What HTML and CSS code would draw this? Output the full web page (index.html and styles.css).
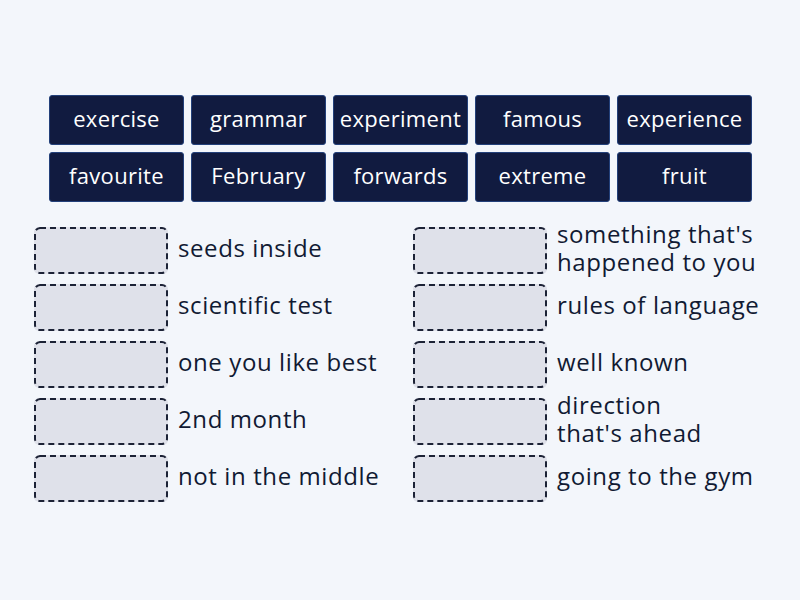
FILE: index.html
```html
<!DOCTYPE html>
<html lang="en">
  <head>
    <meta charset="UTF-8" />
    <meta name="viewport" content="width=device-width, initial-scale=1.0" />
    <title>Match up</title>
    <link rel="stylesheet" href="styles.css">
  </head>
  <body>
    <main class="game">
      <section class="tiles">
        <article class="tile">exercise</article>
        <article class="tile">grammar</article>
        <article class="tile">experiment</article>
        <article class="tile">famous</article>
        <article class="tile">experience</article>
        <article class="tile">favourite</article>
        <article class="tile">February</article>
        <article class="tile">forwards</article>
        <article class="tile">extreme</article>
        <article class="tile">fruit</article>
      </section>
      <section class="clues">
        <div class="clue"><div class="slot"></div><span class="text">seeds inside</span></div>
        <div class="clue"><div class="slot"></div><span class="text">something that's<br>happened to you</span></div>
        <div class="clue"><div class="slot"></div><span class="text">scientific test</span></div>
        <div class="clue"><div class="slot"></div><span class="text">rules of language</span></div>
        <div class="clue"><div class="slot"></div><span class="text">one you like best</span></div>
        <div class="clue"><div class="slot"></div><span class="text">well known</span></div>
        <div class="clue"><div class="slot"></div><span class="text">2nd month</span></div>
        <div class="clue"><div class="slot"></div><span class="text">direction<br>that's ahead</span></div>
        <div class="clue"><div class="slot"></div><span class="text">not in the middle</span></div>
        <div class="clue"><div class="slot"></div><span class="text">going to the gym</span></div>
      </section>
    </main>
  </body>
</html>
```

FILE: styles.css
```css
/* styles.css */
body {
  margin: 0;
  background-color: #f3f6fb;
  font-family: "Open Sans", Lato, sans-serif;
  color: #111a33;
}

.game {
  width: 800px;
  height: 600px;
  padding-top: 95px;
  box-sizing: border-box;
}

.tiles {
  display: grid;
  grid-template-columns: repeat(5, 135px);
  grid-auto-rows: 50px;
  column-gap: 7px;
  row-gap: 7px;
  margin-left: 49px;
}

.tile {
  display: flex;
  justify-content: center;
  align-items: center;
  padding-bottom: 4px;
  box-sizing: border-box;
  background-color: #111b40;
  border: 1px solid #23407a;
  border-radius: 3px;
  color: #fff;
  font-size: 22px;
  letter-spacing: 0.3px;
}

.clues {
  display: grid;
  grid-template-columns: 379px auto;
  grid-auto-rows: 47px;
  row-gap: 10px;
  margin-top: 25px;
  margin-left: 34px;
}

.clue {
  display: flex;
  align-items: center;
  gap: 10px;
}

.slot {
  width: 134px;
  height: 47px;
  flex-shrink: 0;
  background-color: #dfe1ea;
  background-image: url("data:image/svg+xml,%3Csvg xmlns='http://www.w3.org/2000/svg' width='134' height='47'%3E%3Crect x='1' y='1' width='132' height='45' rx='5' fill='none' stroke='%231c2236' stroke-width='2' stroke-dasharray='6 4'/%3E%3C/svg%3E");
  border-radius: 5px;
}

.text {
  font-size: 24px;
  letter-spacing: 0.6px;
  line-height: 28px;
  padding-bottom: 6px;
}
```
